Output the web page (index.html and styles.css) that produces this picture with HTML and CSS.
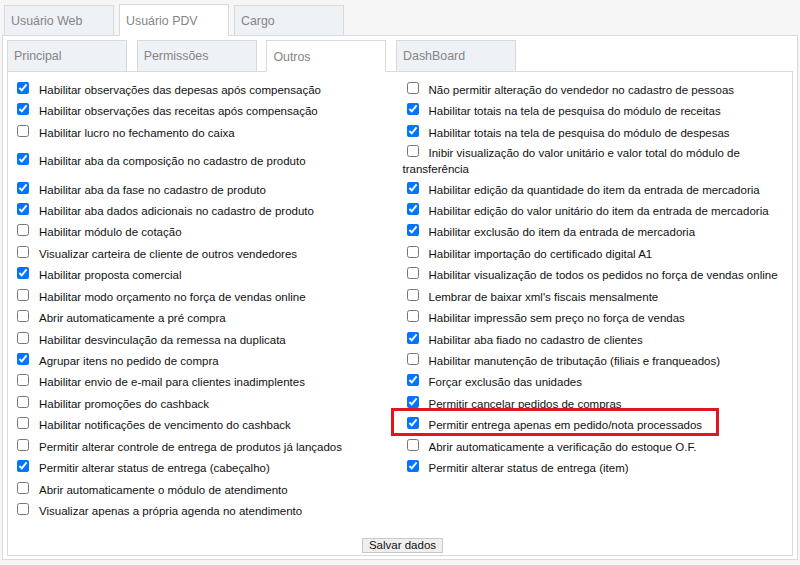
FILE: index.html
```html
<!DOCTYPE html>
<html lang="pt-BR">
<head>
<meta charset="utf-8">
<title>Usuário PDV - Outros</title>
<link rel="stylesheet" href="styles.css">
</head>
<body>
<div class="page">
  <div class="tabs outer-tabs">
    <div class="tab">Usuário Web</div>
    <div class="tab active">Usuário PDV</div>
    <div class="tab">Cargo</div>
  </div>
  <div class="panel outer-panel">
    <div class="tabs inner-tabs">
      <div class="tab">Principal</div>
      <div class="tab">Permissões</div>
      <div class="tab active">Outros</div>
      <div class="tab">DashBoard</div>
    </div>
    <div class="panel inner-panel">
      <div class="options">
        <div class="cell"><label><input type="checkbox" checked>Habilitar observações das depesas após compensação</label></div>
        <div class="cell"><label><input type="checkbox">Não permitir alteração do vendedor no cadastro de pessoas</label></div>

        <div class="cell"><label><input type="checkbox" checked>Habilitar observações das receitas após compensação</label></div>
        <div class="cell"><label><input type="checkbox" checked>Habilitar totais na tela de pesquisa do módulo de receitas</label></div>

        <div class="cell"><label><input type="checkbox">Habilitar lucro no fechamento do caixa</label></div>
        <div class="cell"><label><input type="checkbox" checked>Habilitar totais na tela de pesquisa do módulo de despesas</label></div>

        <div class="cell"><label><input type="checkbox" checked>Habilitar aba da composição no cadastro de produto</label></div>
        <div class="cell"><label><input type="checkbox">Inibir visualização do valor unitário e valor total do módulo de transferência</label></div>

        <div class="cell"><label><input type="checkbox" checked>Habilitar aba da fase no cadastro de produto</label></div>
        <div class="cell"><label><input type="checkbox" checked>Habilitar edição da quantidade do item da entrada de mercadoria</label></div>

        <div class="cell"><label><input type="checkbox" checked>Habilitar aba dados adicionais no cadastro de produto</label></div>
        <div class="cell"><label><input type="checkbox" checked>Habilitar edição do valor unitário do item da entrada de mercadoria</label></div>

        <div class="cell"><label><input type="checkbox">Habilitar módulo de cotação</label></div>
        <div class="cell"><label><input type="checkbox" checked>Habilitar exclusão do item da entrada de mercadoria</label></div>

        <div class="cell"><label><input type="checkbox">Visualizar carteira de cliente de outros vendedores</label></div>
        <div class="cell"><label><input type="checkbox">Habilitar importação do certificado digital A1</label></div>

        <div class="cell"><label><input type="checkbox" checked>Habilitar proposta comercial</label></div>
        <div class="cell"><label><input type="checkbox">Habilitar visualização de todos os pedidos no força de vendas online</label></div>

        <div class="cell"><label><input type="checkbox">Habilitar modo orçamento no força de vendas online</label></div>
        <div class="cell"><label><input type="checkbox">Lembrar de baixar xml's fiscais mensalmente</label></div>

        <div class="cell"><label><input type="checkbox">Abrir automaticamente a pré compra</label></div>
        <div class="cell"><label><input type="checkbox">Habilitar impressão sem preço no força de vendas</label></div>

        <div class="cell"><label><input type="checkbox">Habilitar desvinculação da remessa na duplicata</label></div>
        <div class="cell"><label><input type="checkbox" checked>Habilitar aba fiado no cadastro de clientes</label></div>

        <div class="cell"><label><input type="checkbox" checked>Agrupar itens no pedido de compra</label></div>
        <div class="cell"><label><input type="checkbox">Habilitar manutenção de tributação (filiais e franqueados)</label></div>

        <div class="cell"><label><input type="checkbox">Habilitar envio de e-mail para clientes inadimplentes</label></div>
        <div class="cell"><label><input type="checkbox" checked>Forçar exclusão das unidades</label></div>

        <div class="cell"><label><input type="checkbox">Habilitar promoções do cashback</label></div>
        <div class="cell"><label><input type="checkbox" checked>Permitir cancelar pedidos de compras</label></div>

        <div class="cell"><label><input type="checkbox">Habilitar notificações de vencimento do cashback</label></div>
        <div class="cell highlighted"><label><input type="checkbox" checked>Permitir entrega apenas em pedido/nota processados</label><span class="highlight-box"></span></div>

        <div class="cell"><label><input type="checkbox">Permitir alterar controle de entrega de produtos já lançados</label></div>
        <div class="cell"><label><input type="checkbox">Abrir automaticamente a verificação do estoque O.F.</label></div>

        <div class="cell"><label><input type="checkbox" checked>Permitir alterar status de entrega (cabeçalho)</label></div>
        <div class="cell"><label><input type="checkbox" checked>Permitir alterar status de entrega (item)</label></div>

        <div class="cell"><label><input type="checkbox">Abrir automaticamente o módulo de atendimento</label></div>
        <div class="cell"></div>

        <div class="cell"><label><input type="checkbox">Visualizar apenas a própria agenda no atendimento</label></div>
        <div class="cell"></div>
      </div>
      <div class="actions">
        <button type="button" class="btn">Salvar dados</button>
      </div>
    </div>
  </div>
</div>
</body>
</html>
```

FILE: styles.css
```css
html, body {
  margin: 0;
  padding: 0;
}

body {
  background: #f6f6f6;
  font-family: "Liberation Sans", Arial, sans-serif;
  color: #111111;
}

.page {
  padding-top: 4px;
}

.tabs {
  display: flex;
  align-items: flex-end;
  position: relative;
  z-index: 1;
  margin-bottom: -1px;
}

.tab {
  box-sizing: border-box;
  display: flex;
  align-items: center;
  padding-left: 6px;
  background: #eef1f6;
  border: 1px solid #d9d9d9;
  color: #858585;
  font-size: 12.4px;
}

.tab.active {
  background: #ffffff;
  border-bottom-color: #ffffff;
}

.outer-tabs {
  height: 32px;
  gap: 5px;
  padding-left: 4px;
}

.outer-tabs .tab {
  width: 110px;
  height: 31px;
}

.outer-tabs .tab.active {
  height: 32px;
  padding-top: 1px;
}

.inner-tabs {
  height: 32px;
  gap: 9.7px;
}

.inner-tabs .tab {
  width: 120px;
  height: 32px;
}

.inner-tabs .tab.active {
  padding-top: 2px;
}

.panel {
  background: #ffffff;
  border: 1px solid #d9d9d9;
}

.outer-panel {
  margin: 0 2px 0 2px;
  padding: 4px 4px 3px 4px;
}

.inner-panel {
  padding: 7px 0 2px 5px;
}

.options {
  display: grid;
  grid-template-columns: 1fr 1fr;
}

.cell {
  box-sizing: border-box;
  display: flex;
  align-items: center;
  min-height: 21.45px;
  padding: 1.75px 0;
  font-size: 11.5px;
  line-height: 16px;
}

.cell input[type="checkbox"] {
  width: 12px;
  height: 12px;
  margin: 0 10px 0 4px;
  vertical-align: baseline;
}

.highlighted {
  position: relative;
}

.highlight-box {
  position: absolute;
  left: -12px;
  top: -6.5px;
  width: 328px;
  height: 28px;
  box-sizing: border-box;
  border: 3px solid #e3141c;
  pointer-events: none;
}

.actions {
  display: flex;
  justify-content: center;
  margin-top: 16px;
}

.btn {
  box-sizing: border-box;
  height: 15px;
  padding: 0 6px;
  font-family: "Liberation Sans", Arial, sans-serif;
  font-size: 11.5px;
  line-height: 13px;
  color: #111;
  background: #efefef;
  border: 1px solid #c8c8c8;
  border-radius: 0;
}
```
